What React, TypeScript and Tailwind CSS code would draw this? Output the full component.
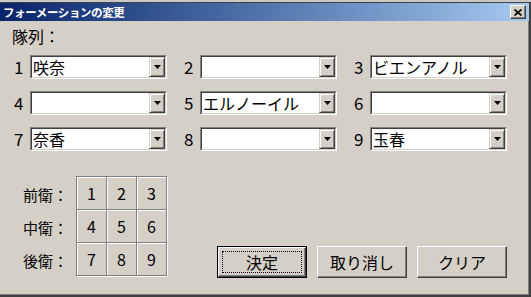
import React from 'react';

const FONT = "font-['Noto_Sans_CJK_JP','Noto_Sans',sans-serif]";

const DropButton: React.FC = () => (
  <div className="flex w-[16px] items-center justify-center border border-t-[#d4d0c8] border-l-[#d4d0c8] border-r-[#404040] border-b-[#404040] bg-[#d4d0c8] shadow-[inset_1px_1px_0_#fff,inset_-1px_-1px_0_#808080]">
    <svg width="7" height="4" viewBox="0 0 7 4">
      <path d="M0 0h7L3.5 4z" fill="#000" />
    </svg>
  </div>
);

const Combo: React.FC<{ value: string }> = ({ value }) => (
  <div className="flex h-[24px] w-[137px] border border-t-[#808080] border-l-[#808080] border-r-white border-b-white">
    <div className="flex flex-1 border border-t-[#404040] border-l-[#404040] border-r-[#d4d0c8] border-b-[#d4d0c8] bg-white">
      <span className="flex flex-1 items-center whitespace-nowrap pl-[1px] text-[16px] leading-none text-black">{value}</span>
      <DropButton />
    </div>
  </div>
);

const Button: React.FC<{ label: string; isDefault?: boolean }> = ({ label, isDefault }) => {
  const face = (
    <div className="flex h-full w-full items-center justify-center border border-t-white border-l-white border-r-[#404040] border-b-[#404040] bg-[#d4d0c8] shadow-[inset_-1px_-1px_0_#808080]">
      {isDefault ? (
        <div className="flex h-[22px] w-[80px] items-center justify-center border border-dotted border-black text-[16px] leading-[20px]">{label}</div>
      ) : (
        <span className="text-[16px] leading-[20px]">{label}</span>
      )}
    </div>
  );
  return isDefault ? (
    <div className="h-[32px] w-[90px] border border-black">{face}</div>
  ) : (
    <div className="h-[32px] w-[90px]">{face}</div>
  );
};

const slots = ['咲奈', '', 'ビエンアノル', '', 'エルノーイル', '', '奈香', '', '玉春'];
const ranks = ['前衛：', '中衛：', '後衛：'];

export default function App() {
  return (
    <div className={`${FONT} flex h-[297px] w-[531px] flex-col overflow-hidden bg-[#d4d0c8] text-black`}>
      <div className="h-[3px] border-b border-[#404040] bg-[#c8c8c8]" />
      <div className="flex flex-1 flex-col border-r-[2px] border-b-[2px] border-r-[#404040] border-b-[#404040] shadow-[inset_-1px_-1px_0_#808080]">
        <div className="flex h-[18px] items-center bg-gradient-to-r from-[#0a246a] to-[#a6caf0] pl-[3px] pr-[3px]">
          <span className="text-[11.5px] font-bold leading-[14px] tracking-[-0.4px] text-white">フォーメーションの変更</span>
          <div className="ml-auto flex h-[14px] w-[16px] items-center justify-center border border-t-white border-l-white border-r-[#404040] border-b-[#404040] bg-[#d4d0c8] shadow-[inset_-1px_-1px_0_#808080]">
            <svg width="8" height="7" viewBox="0 0 8 7">
              <path d="M0.5 0.5L7.5 6.5M7.5 0.5L0.5 6.5" stroke="#000" strokeWidth="1.6" />
            </svg>
          </div>
        </div>
        <div className="flex flex-1 flex-col pl-[14px] pr-[22px]">
          <div className="ml-[-2px] mt-[5px] text-[16px] leading-[20px]">隊列：</div>
          <div className="mt-[9px] grid grid-cols-3 gap-x-[17px] gap-y-[12px]">
            {slots.map((v, i) => (
              <div key={i} className="flex items-center">
                <span className="w-[16px] text-[17px] leading-[24px]">{i + 1}</span>
                <Combo value={v} />
              </div>
            ))}
          </div>
          <div className="mt-[25px] flex items-start">
            <div className="ml-[9px] flex items-start">
              <div className="flex flex-col pt-[3px]">
                {ranks.map((r) => (
                  <div key={r} className="flex h-[33px] items-center text-[15px]">{r}</div>
                ))}
              </div>
              <div className="ml-[8px] grid grid-cols-3 border-t border-l border-[#808080] shadow-[1px_1px_0_#fff]">
                {Array.from({ length: 9 }, (_, i) => (
                  <div key={i} className="flex h-[33px] w-[30px] items-center justify-center border-r border-b border-[#808080] text-[16px] shadow-[inset_1px_1px_0_#fff]">
                    {i + 1}
                  </div>
                ))}
              </div>
            </div>
            <div className="ml-auto mt-[70px] flex gap-[10px]">
              <Button label="決定" isDefault />
              <Button label="取り消し" />
              <Button label="クリア" />
            </div>
          </div>
        </div>
      </div>
    </div>
  );
}
